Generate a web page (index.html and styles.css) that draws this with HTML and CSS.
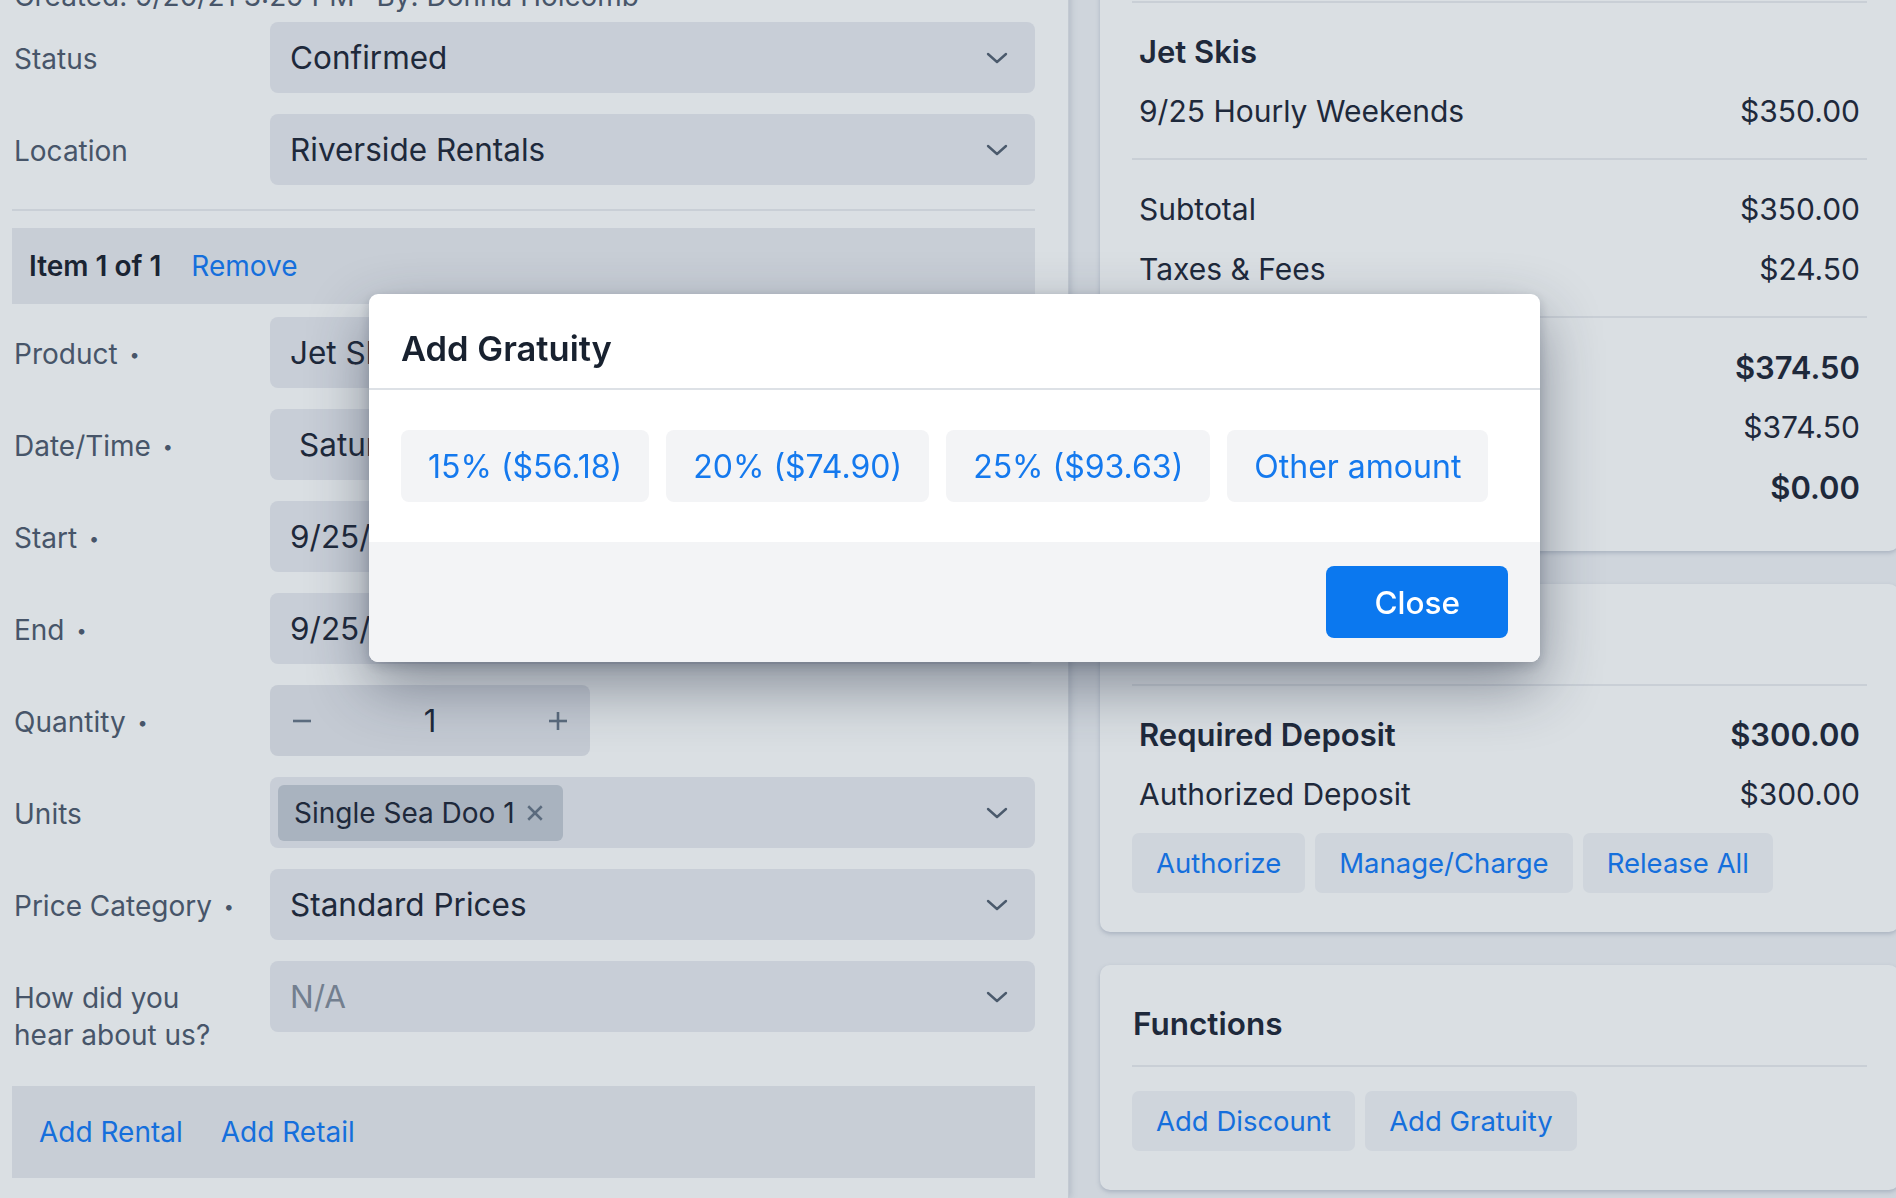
FILE: index.html
```html
<!DOCTYPE html>
<html lang="en">
<head>
  <meta charset="UTF-8">
  <meta name="viewport" content="width=device-width, initial-scale=1.0">
  <title>Booking - Add Gratuity</title>
  <link rel="stylesheet" href="styles.css">
</head>
<body>
  <div class="page">
    <main class="booking">
      <p class="created">Created: 9/20/21 3:29 PM <span class="by">By: Donna Holcomb</span></p>

      <div class="field-row">
        <div class="field-label">Status</div>
        <div class="select">
          <span>Confirmed</span>
          <svg class="chevron" viewBox="0 0 22 12"><polyline points="2,2 11,10 20,2"/></svg>
        </div>
      </div>
      <div class="field-row">
        <div class="field-label">Location</div>
        <div class="select">
          <span>Riverside Rentals</span>
          <svg class="chevron" viewBox="0 0 22 12"><polyline points="2,2 11,10 20,2"/></svg>
        </div>
      </div>

      <hr class="rule">

      <div class="item-bar">
        <strong>Item 1 of 1</strong>
        <a href="#" class="link">Remove</a>
      </div>

      <div class="field-row">
        <div class="field-label">Product <span class="dot">•</span></div>
        <div class="select">
          <span>Jet Skis</span>
          <svg class="chevron" viewBox="0 0 22 12"><polyline points="2,2 11,10 20,2"/></svg>
        </div>
      </div>
      <div class="field-row">
        <div class="field-label">Date/Time <span class="dot">•</span></div>
        <div class="select date">
          <span>Saturday, September 25, 2021</span>
        </div>
      </div>
      <div class="field-row">
        <div class="field-label">Start <span class="dot">•</span></div>
        <div class="select">
          <span>9/25/21 10:00 AM</span>
        </div>
      </div>
      <div class="field-row">
        <div class="field-label">End <span class="dot">•</span></div>
        <div class="select">
          <span>9/25/21 11:00 AM</span>
        </div>
      </div>
      <div class="field-row">
        <div class="field-label">Quantity <span class="dot">•</span></div>
        <div class="stepper">
          <svg class="step-icon" viewBox="0 0 20 20"><line x1="1" y1="10" x2="19" y2="10"/></svg>
          <span>1</span>
          <svg class="step-icon" viewBox="0 0 20 20"><line x1="1" y1="10" x2="19" y2="10"/><line x1="10" y1="1" x2="10" y2="19"/></svg>
        </div>
      </div>
      <div class="field-row">
        <div class="field-label">Units</div>
        <div class="select multi">
          <span class="chip">Single Sea Doo 1
            <svg class="chip-x" viewBox="0 0 16 16"><line x1="2" y1="2" x2="14" y2="14"/><line x1="14" y1="2" x2="2" y2="14"/></svg>
          </span>
          <svg class="chevron" viewBox="0 0 22 12"><polyline points="2,2 11,10 20,2"/></svg>
        </div>
      </div>
      <div class="field-row">
        <div class="field-label">Price Category <span class="dot">•</span></div>
        <div class="select">
          <span>Standard Prices</span>
          <svg class="chevron" viewBox="0 0 22 12"><polyline points="2,2 11,10 20,2"/></svg>
        </div>
      </div>
      <div class="field-row">
        <div class="field-label">How did you<br>hear about us?</div>
        <div class="select">
          <span class="placeholder">N/A</span>
          <svg class="chevron" viewBox="0 0 22 12"><polyline points="2,2 11,10 20,2"/></svg>
        </div>
      </div>

      <div class="add-bar">
        <a href="#" class="link">Add Rental</a>
        <a href="#" class="link">Add Retail</a>
      </div>
    </main>

    <aside class="summary">
      <section class="card">
        <h3 class="card-title">Summary</h3>
        <div class="lines">
          <div class="line strong"><span>Jet Skis</span></div>
          <div class="line"><span>9/25 Hourly Weekends</span><span>$350.00</span></div>
        </div>
        <div class="lines">
          <div class="line"><span>Subtotal</span><span>$350.00</span></div>
          <div class="line"><span>Taxes &amp; Fees</span><span>$24.50</span></div>
        </div>
        <div class="lines">
          <div class="line strong"><span>Total</span><span>$374.50</span></div>
          <div class="line"><span>Paid</span><span>$374.50</span></div>
          <div class="line strong"><span>Balance</span><span>$0.00</span></div>
        </div>
      </section>

      <section class="card">
        <h3 class="card-title">Deposits</h3>
        <div class="lines">
          <div class="line strong"><span>Required Deposit</span><span>$300.00</span></div>
          <div class="line"><span>Authorized Deposit</span><span>$300.00</span></div>
        </div>
        <div class="actions">
          <button class="btn-soft">Authorize</button>
          <button class="btn-soft">Manage/Charge</button>
          <button class="btn-soft">Release All</button>
        </div>
      </section>

      <section class="card">
        <h3 class="card-title">Functions</h3>
        <div class="actions">
          <button class="btn-soft">Add Discount</button>
          <button class="btn-soft">Add Gratuity</button>
        </div>
      </section>
    </aside>
  </div>

  <div class="overlay">
    <div class="modal">
      <div class="modal-header">
        <h2>Add Gratuity</h2>
      </div>
      <div class="modal-body">
        <button class="tip">15% ($56.18)</button>
        <button class="tip">20% ($74.90)</button>
        <button class="tip">25% ($93.63)</button>
        <button class="tip">Other amount</button>
      </div>
      <div class="modal-footer">
        <button class="btn-primary">Close</button>
      </div>
    </div>
  </div>
</body>
</html>
```
FILE: styles.css
```css
html,
body {
  margin: 0;
  height: 1198px;
  overflow: hidden;
}

body {
  font-family: Inter, "Noto Sans", "Liberation Sans", sans-serif;
  background-color: #cfd5dc;
  color: #1e293b;
}

.page {
  display: flex;
  width: 1899px;
  margin-top: -99px;
}

/* left column: booking form */
.booking {
  flex: none;
  width: 1068px;
  min-height: 1297px;
  box-sizing: border-box;
  padding: 79px 33px 0 12px;
  background-color: #dadfe3;
  box-shadow: 1px 0 0 #c3cad2, 3px 0 6px rgba(100, 116, 139, 0.25);
  position: relative;
  z-index: 1;
}

.created {
  margin: 0 0 5px 2px;
  font-size: 28px;
  line-height: 33px;
  padding-top: 0;
  margin-bottom: 9px;
  color: #475569;
}

.created .by {
  margin-left: 14px;
}

.field-row {
  display: grid;
  grid-template-columns: 258px 1fr;
  margin-bottom: 21px;
}

.field-label {
  padding: 19px 0 0 2px;
  font-size: 28px;
  line-height: 37px;
  color: #475569;
}

.dot {
  font-size: 18px;
  margin-left: 4px;
  vertical-align: 3px;
}

.select {
  height: 71px;
  box-sizing: border-box;
  display: flex;
  align-items: center;
  justify-content: space-between;
  padding: 0 27px 0 20px;
  background-color: #c8ced7;
  border-radius: 8px;
  font-size: 31.5px;
  color: #1e293b;
  white-space: nowrap;
  overflow: hidden;
}

.select.date {
  padding-left: 29px;
}

.select.multi {
  padding-left: 8px;
}

.placeholder {
  color: #737f8f;
}

.chevron {
  width: 22px;
  height: 12px;
  flex: none;
  fill: none;
  stroke: #4b5a6c;
  stroke-width: 2.4;
  stroke-linecap: round;
  stroke-linejoin: round;
}

.rule {
  border: 0;
  border-top: 2px solid #c9cfd6;
  margin: 24px 0 17px;
}

.item-bar {
  display: flex;
  align-items: center;
  gap: 30px;
  height: 76px;
  padding: 0 17px;
  margin-bottom: 13px;
  background-color: #c8ced6;
  font-size: 28px;
}

.item-bar strong {
  font-weight: 600;
  color: #1a2433;
}

.link {
  color: #156fdc;
  text-decoration: none;
  font-size: 28px;
}

.stepper {
  width: 320px;
  height: 71px;
  box-sizing: border-box;
  display: flex;
  align-items: center;
  justify-content: space-between;
  padding: 0 22px;
  background-color: #c4cad3;
  border-radius: 8px;
  font-size: 31px;
}

.step-icon {
  width: 20px;
  height: 20px;
  stroke: #5b6b7e;
  stroke-width: 2.6;
}

.chip {
  display: flex;
  align-items: center;
  gap: 11px;
  height: 56px;
  padding: 0 19px 0 16px;
  background-color: #a9b3bf;
  border-radius: 6px;
  font-size: 28px;
  color: #1e293b;
}

.chip-x {
  width: 18px;
  height: 18px;
  stroke: #5b6b7e;
  stroke-width: 2.2;
}

.add-bar {
  display: flex;
  align-items: center;
  gap: 38px;
  height: 92px;
  margin-top: 32px;
  padding: 0 27px;
  background-color: #c8ced6;
}

/* right column: summary cards */
.summary {
  flex: none;
  width: 799px;
  padding-left: 32px;
  display: flex;
  flex-direction: column;
  gap: 33px;
}

.card {
  background-color: #dadfe3;
  border-radius: 10px;
  padding: 0 32px 34px;
  box-shadow: 0 2px 4px rgba(100, 116, 139, 0.35);
}

.card-title {
  margin: 0;
  padding: 40px 1px 22px;
  font-size: 31.5px;
  line-height: 38px;
  font-weight: 600;
  color: #1e293b;
  border-bottom: 2px solid #c9cfd6;
}

.lines {
  padding-top: 18px;
}

.lines + .lines {
  border-top: 2px solid #c9cfd6;
  margin-top: 17px;
  padding-top: 19px;
}

.line {
  display: flex;
  justify-content: space-between;
  align-items: center;
  height: 60px;
  padding: 0 7px;
  font-size: 30px;
}

.line.strong {
  font-weight: 600;
  font-size: 31px;
}

.actions {
  display: flex;
  gap: 10px;
  margin: 9px 0 5px;
}

.card-title + .actions {
  margin-top: 24px;
}

.btn-soft {
  height: 60px;
  padding: 0 24px;
  border: none;
  border-radius: 7px;
  background-color: #cfd5dc;
  font-family: inherit;
  font-size: 27.5px;
  color: #156fdc;
}

/* gratuity modal */
.overlay {
  position: fixed;
  inset: 0;
  display: flex;
  justify-content: center;
  align-items: flex-start;
  padding: 294px 0 0 13px;
  box-sizing: border-box;
  z-index: 10;
}

.modal {
  width: 1171px;
  background-color: #fff;
  border-radius: 9px;
  overflow: hidden;
  box-shadow: 0 24px 60px rgba(30, 41, 59, 0.45), 0 4px 12px rgba(30, 41, 59, 0.2);
}

.modal-header {
  padding: 35px 32px 19px;
  border-bottom: 2px solid #dde1e6;
}

.modal-header h2 {
  margin: 0;
  font-size: 34.5px;
  line-height: 40px;
  font-weight: 600;
  color: #18212f;
}

.modal-body {
  display: flex;
  gap: 17px;
  padding: 40px 32px;
}

.tip {
  height: 72px;
  padding: 0 27px;
  border: none;
  border-radius: 8px;
  background-color: #f3f4f6;
  font-family: inherit;
  font-size: 32px;
  color: #1479ee;
}

.modal-footer {
  display: flex;
  justify-content: flex-end;
  padding: 24px 32px;
  background-color: #f3f4f6;
}

.btn-primary {
  height: 72px;
  padding: 0 48px;
  border: none;
  border-radius: 8px;
  background-color: #0b78ef;
  font-family: inherit;
  font-size: 31.5px;
  font-weight: 500;
  color: #fff;
}
```
